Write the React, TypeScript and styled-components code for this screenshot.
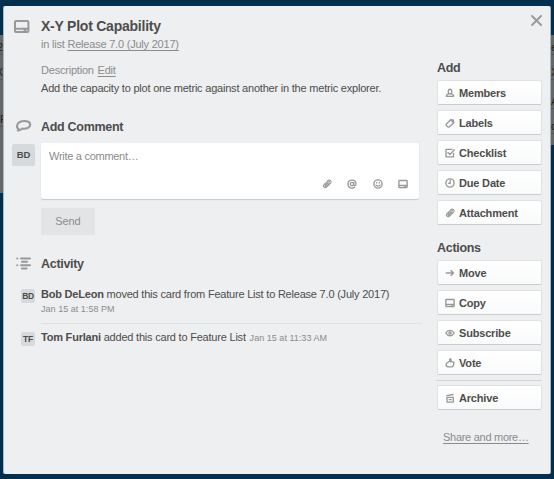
import React from "react";
import styled, { createGlobalStyle } from "styled-components";

const GlobalStyle = createGlobalStyle`
  * { box-sizing: border-box; }
  body {
    margin: 0;
    background: #00304d;
    font-family: "Liberation Sans", Arial, sans-serif;
    font-size: 11px;
    line-height: 14px;
    color: #4d4d4d;
    overflow: hidden;
  }
`;

const Page = styled.div`
  display: flex;
  align-items: flex-start;
  width: 554px;
  height: 479px;
  padding-top: 6px;
`;

const ListEdge = styled.div<{ $width: number; $height: number }>`
  flex: none;
  width: ${(p) => p.$width}px;
  height: ${(p) => p.$height}px;
  margin-top: 29px;
  padding-top: 5px;
  overflow: hidden;
  background: #666768;
  color: #222;
`;

const EdgeLine = styled.div<{ $gap?: number; $right?: boolean }>`
  display: flex;
  justify-content: ${(p) => (p.$right ? "flex-end" : "flex-start")};
  height: 15px;
  margin-bottom: ${(p) => p.$gap ?? 10}px;
  border-bottom: 1px solid #565656;
`;

const Dialog = styled.main`
  flex: none;
  display: flex;
  width: 548px;
  height: 468px;
  padding: 11px 9px 0 8px;
  background: #edeff0;
  border: solid #aab7bf;
  border-width: 0 1px;
  border-radius: 2px;
`;

const Main = styled.div`
  width: 410px;
  flex: none;
`;

const Row = styled.section<{ $top?: number }>`
  display: grid;
  grid-template-columns: 29px 1fr;
  margin-top: ${(p) => p.$top ?? 0}px;
`;

const Gutter = styled.div<{ $top?: number; $end?: boolean; $right?: number }>`
  display: flex;
  align-items: flex-start;
  justify-content: ${(p) => (p.$end ? "flex-end" : "flex-start")};
  padding: ${(p) => p.$top ?? 0}px ${(p) => p.$right ?? 0}px 0 0;
`;

const Heading = styled.h2<{ $size?: number }>`
  margin: 0;
  font-size: ${(p) => p.$size ?? 12.5}px;
  line-height: 18px;
  letter-spacing: ${(p) => (p.$size ? -0.23 : -0.3)}px;
  white-space: nowrap;
`;

const Text = styled.p<{ $top?: number; $quiet?: boolean }>`
  margin: ${(p) => p.$top ?? 0}px 0 0;
  color: ${(p) => (p.$quiet ? "#8c8c8c" : "inherit")};
  letter-spacing: -0.21px;
  white-space: nowrap;
`;

const Link = styled.a<{ $left?: number }>`
  color: #8c8c8c;
  text-decoration: underline;
  text-underline-offset: 2px;
  margin-left: ${(p) => p.$left ?? 0}px;
`;

const Avatar = styled.span<{ $small?: boolean }>`
  flex: none;
  width: ${(p) => (p.$small ? 14 : 23)}px;
  height: ${(p) => (p.$small ? 14 : 22)}px;
  border-radius: 2px;
  background: #d6dadc;
  text-align: center;
  font-weight: bold;
  font-size: ${(p) => (p.$small ? 8.5 : 9.5)}px;
  letter-spacing: ${(p) => (p.$small ? -0.3 : 0)}px;
  line-height: ${(p) => (p.$small ? 14 : 22)}px;
`;

const CommentBox = styled.div`
  display: flex;
  flex-direction: column;
  justify-content: space-between;
  width: 378px;
  height: 56px;
  padding: 6px 11px 10px 8px;
  background: #fff;
  border-radius: 2px;
  box-shadow: 0 1px 1px #c4c9cc;
  color: #8c8c8c;
  letter-spacing: -0.28px;
`;

const Tools = styled.div`
  display: flex;
  justify-content: flex-end;
  gap: 15.5px;
  height: 10px;
`;

const SendButton = styled.button`
  display: block;
  width: 54px;
  height: 27px;
  margin-top: 9px;
  padding: 0;
  border: 0;
  border-radius: 2px;
  background: #e2e4e6;
  color: #8c8c8c;
  font: 11px/27px "Liberation Sans", Arial, sans-serif;
  letter-spacing: -0.1px;
`;

const Time = styled.span<{ $left?: number }>`
  font-size: 9px;
  color: #8c8c8c;
  margin-left: ${(p) => p.$left ?? 0}px;
  letter-spacing: 0.03px;
`;

const Divider = styled.hr<{ $margin: string; $color?: string }>`
  height: 1px;
  border: 0;
  margin: ${(p) => p.$margin};
  background: ${(p) => p.$color ?? "#dfe2e4"};
`;

const Sidebar = styled.aside`
  width: 106px;
  margin: 42px 0 0 14px;
`;

const SideHeading = styled(Heading)`
  padding-left: 1px;
`;

const ButtonList = styled.div`
  display: flex;
  flex-direction: column;
  gap: 5px;
  margin: 3px 0 14px;
`;

const SideButton = styled.button`
  display: flex;
  align-items: center;
  gap: 4px;
  width: 105px;
  height: 25px;
  margin-left: 1px;
  padding: 0 0 0 7px;
  border: 1px solid #dfe1e3;
  border-bottom-color: #c9cdd0;
  border-radius: 2px;
  background: linear-gradient(#fff, #f9fafa);
  color: #4d4d4d;
  font: bold 11px/14px "Liberation Sans", Arial, sans-serif;
  letter-spacing: -0.18px;
`;

const ShareLink = styled(Link)`
  display: block;
  margin: 20px 0 0 7px;
  letter-spacing: -0.28px;
  white-space: nowrap;
`;

const Svg = styled.svg`
  flex: none;
  display: block;
  fill: none;
  stroke: #999;
  stroke-linecap: round;
  stroke-linejoin: round;
`;

const CloseIcon = styled(Svg)`
  position: absolute;
  left: 531px;
  top: 15px;
`;

type IconName =
  | "card" | "member" | "label" | "check" | "clock" | "clip"
  | "arrow" | "eye" | "vote" | "archive" | "at" | "smile";

const shapes: Record<IconName, React.ReactNode> = {
  card: <><rect x=".9" y="1.5" width="8.2" height="7" rx=".5" /><path d="M1 6.4h8M6.6 7.6h.6" /></>,
  member: <><path d="M3.3 4.2c-.7-3.9 4.1-3.9 3.4 0-.2 1-.8 1.5-.8 1.5 1.9.4 2.7 1.1 2.7 2.6H1.4c0-1.5.8-2.2 2.7-2.6 0 0-.6-.5-.8-1.5Z" /><path d="M4 5.8h2" /></>,
  label: <><path d="m1.2 6.2 4.4-4.4 2.7.2.4 2.7-4.5 4.2c-1.1.8-3.7-1.7-3-2.7Z" /><path d="m5.6 1.8 3.1 2.9" /></>,
  check: <><path d="M8.5 5.3v3.6H1V1.3h6" /><path d="m3 4.6 2 2 4.2-4.8" /></>,
  clock: <><circle cx="5" cy="5" r="4.1" /><path d="M5.2 2.6v2.7H3.6" /></>,
  clip: <g strokeWidth="1.05"><path d="M3.6 6.7 6.8 3.5c1.3-1.1.1-2.3-1-1.3L2.1 5.5C.3 7.5 2.6 9.8 4.6 8l3.8-3.6C10.4 2.2 7.6-.1 5.6 1.6" /><path d="M5.7 3.9 3.1 6.2c-.8 1 .4 1.6 1.3.9l2.9-2.6" /></g>,
  arrow: <path d="M1.2 5h7.3M6 2.6 8.5 5 6 7.4" />,
  eye: <><path d="M.8 5c2.1-3.6 6.3-3.6 8.4 0-2.1 3.6-6.3 3.6-8.4 0Z" /><circle cx="5" cy="5" r="1.1" /></>,
  vote: <path d="M3 4.3 4.7 3.2V1.1c1.5-.4 1.7 1 1.2 2.7h2.3c1 .2.8 1.3.5 1.7.1 1.3-.4 2.8-1.5 3.4H3.3C1.8 8.7 1.1 7.7 1.1 6.5c0-1.2.7-2 1.9-2.2Z" />,
  archive: <><path d="M2 4.4h6.3v4.7H2V4.4Zm0-1.8 6-1.1M4.2 6.6h2" /></>,
  at: <><circle cx="5" cy="5" r="1.7" /><path d="M6.7 3.4v2.3c.2 1.5 2.3 1.1 2.3-.7C9-.2 1-.2 1 5c0 4 4 5 6.5 3.4" /></>,
  smile: <><circle cx="5" cy="5" r="4.1" /><path d="M3.7 3.4v.5M6.3 3.4v.5M3 6c.8 1.4 3.2 1.4 4 0" /></>,
};

const Icon = ({ name, size = 10 }: { name: IconName; size?: number }) => (
  <Svg width={size} height={size} viewBox="0 0 10 10" strokeWidth="1.35">{shapes[name]}</Svg>
);

const addItems: [IconName, string][] = [
  ["member", "Members"], ["label", "Labels"], ["check", "Checklist"],
  ["clock", "Due Date"], ["clip", "Attachment"],
];
const actionItems: [IconName, string][] = [
  ["arrow", "Move"], ["card", "Copy"], ["eye", "Subscribe"], ["vote", "Vote"],
];

export default function App() {
  return (
    <>
      <GlobalStyle />
      <Page>
        <ListEdge $width={3} $height={158}>
          <EdgeLine $right>2</EdgeLine>
          <EdgeLine $right $gap={32}>X</EdgeLine>
          <EdgeLine>F</EdgeLine>
        </ListEdge>
        <Dialog>
          <Main>
            <Row>
              <Gutter $top={2}>
                <Svg width="18" height="16" viewBox="0 0 18 16" strokeWidth="2">
                  <rect x="3" y="2" width="13.4" height="11" rx="1" />
                  <path d="M3 9.7h13.4M12.5 11.3h1" />
                </Svg>
              </Gutter>
              <div>
                <Heading $size={14}>X-Y Plot Capability</Heading>
                <Text $top={2} $quiet>in list <Link>Release 7.0 (July 2017)</Link></Text>
                <Text $top={12} $quiet>Description <Link $left={1}>Edit</Link></Text>
                <Text $top={4}>Add the capacity to plot one metric against another in the metric explorer.</Text>
              </div>
            </Row>
            <Row $top={23}>
              <Gutter>
                <Svg width="20" height="16" viewBox="0 0 20 16" strokeWidth="2">
                  <path d="M6.8 11.4C3.6 9 4.7 4.2 10.2 3.2c4.2-.8 8 .4 8 3.4 0 3.2-4 4.6-8.1 4-1.2 1.2-2.8 2-4.3 2 .5-.2.9-.6 1-1.2Z" />
                </Svg>
              </Gutter>
              <Heading>Add Comment</Heading>
            </Row>
            <Row $top={7}>
              <Gutter $top={1}><Avatar>BD</Avatar></Gutter>
              <div>
                <CommentBox>
                  <span>Write a comment…</span>
                  <Tools>
                    <Icon name="clip" />
                    <Icon name="at" />
                    <Icon name="smile" />
                    <Icon name="card" />
                  </Tools>
                </CommentBox>
                <SendButton>Send</SendButton>
              </div>
            </Row>
            <Row $top={20}>
              <Gutter $top={1}>
                <Svg width="20" height="16" viewBox="0 0 20 16" strokeWidth="2">
                  <path d="M5.2 2.4h.1M5.2 9.2h.1M9 2.4h9M10 5.7h5M9 9.2h9M10 12.4h4.5" />
                </Svg>
              </Gutter>
              <Heading>Activity</Heading>
            </Row>
            <Row $top={14}>
              <Gutter $top={2} $end $right={6}><Avatar $small>BD</Avatar></Gutter>
              <div>
                <Text><b>Bob DeLeon</b> moved this card from Feature List to Release 7.0 (July 2017)</Text>
                <Text><Time>Jan 15 at 1:58 PM</Time></Text>
                <Divider $margin="7px 0 6px" />
              </div>
            </Row>
            <Row>
              <Gutter $top={2} $end $right={6}><Avatar $small>TF</Avatar></Gutter>
              <Text><b>Tom Furlani</b> added this card to Feature List <Time $left={1}>Jan 15 at 11:33 AM</Time></Text>
            </Row>
          </Main>
          <Sidebar>
            <SideHeading>Add</SideHeading>
            <ButtonList>
              {addItems.map(([icon, label]) => (
                <SideButton key={label}><Icon name={icon} />{label}</SideButton>
              ))}
            </ButtonList>
            <SideHeading>Actions</SideHeading>
            <ButtonList>
              {actionItems.map(([icon, label]) => (
                <SideButton key={label}><Icon name={icon} />{label}</SideButton>
              ))}
            </ButtonList>
            <Divider $margin="-9px 0 4px" $color="#d3d6d9" />
            <SideButton><Icon name="archive" />Archive</SideButton>
            <ShareLink>Share and more…</ShareLink>
          </Sidebar>
        </Dialog>
        <ListEdge $width={3} $height={110}>
          <EdgeLine>e</EdgeLine>
          <EdgeLine $gap={14}>X</EdgeLine>
          <EdgeLine>A</EdgeLine>
          <EdgeLine>d</EdgeLine>
        </ListEdge>
      </Page>
      <CloseIcon width="11" height="11" viewBox="0 0 11 11" strokeWidth="1.9">
        <path d="m1 1 9 9m0-9-9 9" />
      </CloseIcon>
    </>
  );
}
